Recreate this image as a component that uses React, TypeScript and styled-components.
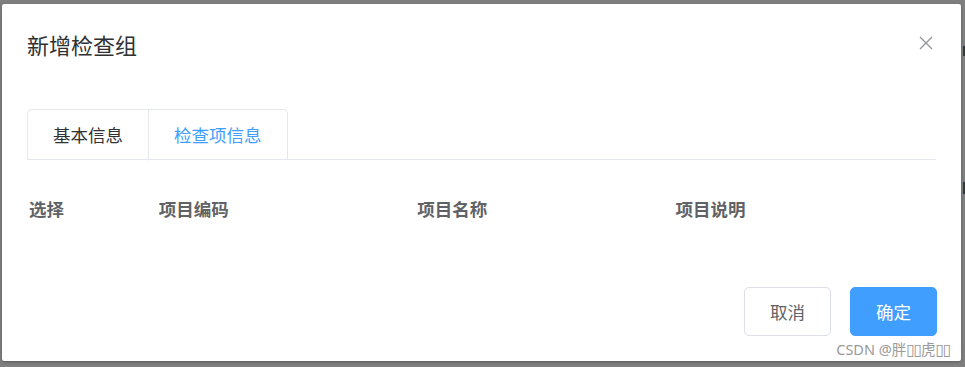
import React, { useState } from 'react'
import styled, { createGlobalStyle } from 'styled-components'

const GlobalStyle = createGlobalStyle`
  html, body {
    margin: 0;
    padding: 0;
    background: #7f7f7f;
    font-family: "Microsoft YaHei", "Noto Sans CJK SC", "Noto Sans", sans-serif;
  }
`

const columns = [
  { key: 'select', label: '选择', width: 130 },
  { key: 'code', label: '项目编码', width: 259 },
  { key: 'name', label: '项目名称', width: 259 },
  { key: 'remark', label: '项目说明', width: 261 },
]

const tabs = ['基本信息', '检查项信息']

const App = () => {
  const [active, setActive] = useState(1)

  return (
    <>
      <GlobalStyle />
      <Overlay>
        <BehindMarks>
          <Mark />
          <Mark $tall />
        </BehindMarks>
        <Dialog>
          <Header>
            <Title>新增检查组</Title>
            <CloseBtn aria-label="close">
              <svg width="14" height="14" viewBox="0 0 14 14">
                <path d="M1 1 L13 13 M13 1 L1 13" stroke="#909399" strokeWidth="1.3" fill="none" />
              </svg>
            </CloseBtn>
          </Header>

          <Body>
            <TabsHeader>
              <TabsNav>
                {tabs.map((t, i) => (
                  <TabItem key={t} $active={i === active} $first={i === 0} onClick={() => setActive(i)}>
                    {t}
                  </TabItem>
                ))}
              </TabsNav>
            </TabsHeader>

            <Table>
              <HeadRow>
                {columns.map((c) => (
                  <HeadCell key={c.key} style={{ width: c.width }}>
                    {c.label}
                  </HeadCell>
                ))}
              </HeadRow>
            </Table>
          </Body>

          <Footer>
            <Button>取消</Button>
            <Button $primary>确定</Button>
          </Footer>

          <Watermark>
            CSDN @胖<Tofu>▯▯</Tofu>虎<Tofu>▯▯</Tofu>
          </Watermark>
        </Dialog>
      </Overlay>
    </>
  )
}

export default App

const Overlay = styled.div`
  position: relative;
  width: 965px;
  height: 367px;
  padding: 4px 0 0 2px;
  box-sizing: border-box;
  overflow: hidden;
`

const BehindMarks = styled.div`
  position: absolute;
  right: 0;
  top: 46px;
  display: flex;
  flex-direction: column;
  gap: 126px;
`

const Mark = styled.div<{ $tall?: boolean }>`
  width: 2px;
  height: ${(p) => (p.$tall ? 12 : 10)}px;
  background: #2f3a3a;
`

const Dialog = styled.div`
  position: relative;
  width: 959px;
  height: 357px;
  background: #fff;
  border-radius: 2px;
  box-shadow: 0 1px 3px rgba(0, 0, 0, 0.3);
  display: flex;
  flex-direction: column;
  box-sizing: border-box;
`

const Header = styled.div`
  position: relative;
  padding: 25px 25px 12px;
`

const Title = styled.span`
  display: block;
  font-size: 22px;
  line-height: 30px;
  color: #303133;
`

const CloseBtn = styled.button`
  position: absolute;
  top: 29px;
  right: 25px;
  width: 20px;
  height: 20px;
  padding: 0;
  border: none;
  background: transparent;
  display: flex;
  align-items: center;
  justify-content: center;
  cursor: pointer;
`

const Body = styled.div`
  flex: 1;
  padding: 38px 25px 0;
`

const TabsHeader = styled.div`
  border-bottom: 1px solid #e4e7ed;
  height: 50px;
  margin-bottom: 35px;
`

const TabsNav = styled.div`
  display: inline-flex;
  border: 1px solid #e4e7ed;
  border-bottom: none;
  border-radius: 5px 5px 0 0;
  box-sizing: border-box;
  height: 51px;
`

const TabItem = styled.div<{ $active: boolean; $first: boolean }>`
  height: 50px;
  line-height: 50px;
  padding: 0 25px;
  font-size: 17.5px;
  color: ${(p) => (p.$active ? '#409eff' : '#303133')};
  border-left: ${(p) => (p.$first ? 'none' : '1px solid #e4e7ed')};
  border-bottom: 1px solid ${(p) => (p.$active ? '#fff' : 'transparent')};
  cursor: pointer;
`

const Table = styled.div`
  width: 909px;
`

const HeadRow = styled.div`
  display: flex;
  padding-left: 2px;
`

const HeadCell = styled.div`
  box-sizing: border-box;
  font-size: 17.5px;
  font-weight: bold;
  color: #606266;
  line-height: 27px;
`

const Footer = styled.div`
  display: flex;
  justify-content: flex-end;
  gap: 19px;
  padding: 0 24px 25px;
`

const Button = styled.button<{ $primary?: boolean }>`
  width: 87px;
  height: 49px;
  border-radius: 5px;
  font-family: inherit;
  font-size: 17.5px;
  border: 1px solid ${(p) => (p.$primary ? '#409eff' : '#dcdfe6')};
  background: ${(p) => (p.$primary ? '#409eff' : '#fff')};
  color: ${(p) => (p.$primary ? '#fff' : '#606266')};
  cursor: pointer;
`

const Watermark = styled.div`
  position: absolute;
  right: 11px;
  bottom: 2px;
  font-size: 14.5px;
  color: #9a9a9a;
  font-family: "Noto Sans", "Noto Sans CJK SC", sans-serif;
  white-space: nowrap;
`

const Tofu = styled.span`
  font-family: "DejaVu Sans", sans-serif;
  letter-spacing: -1.5px;
  font-size: 16px;
`
